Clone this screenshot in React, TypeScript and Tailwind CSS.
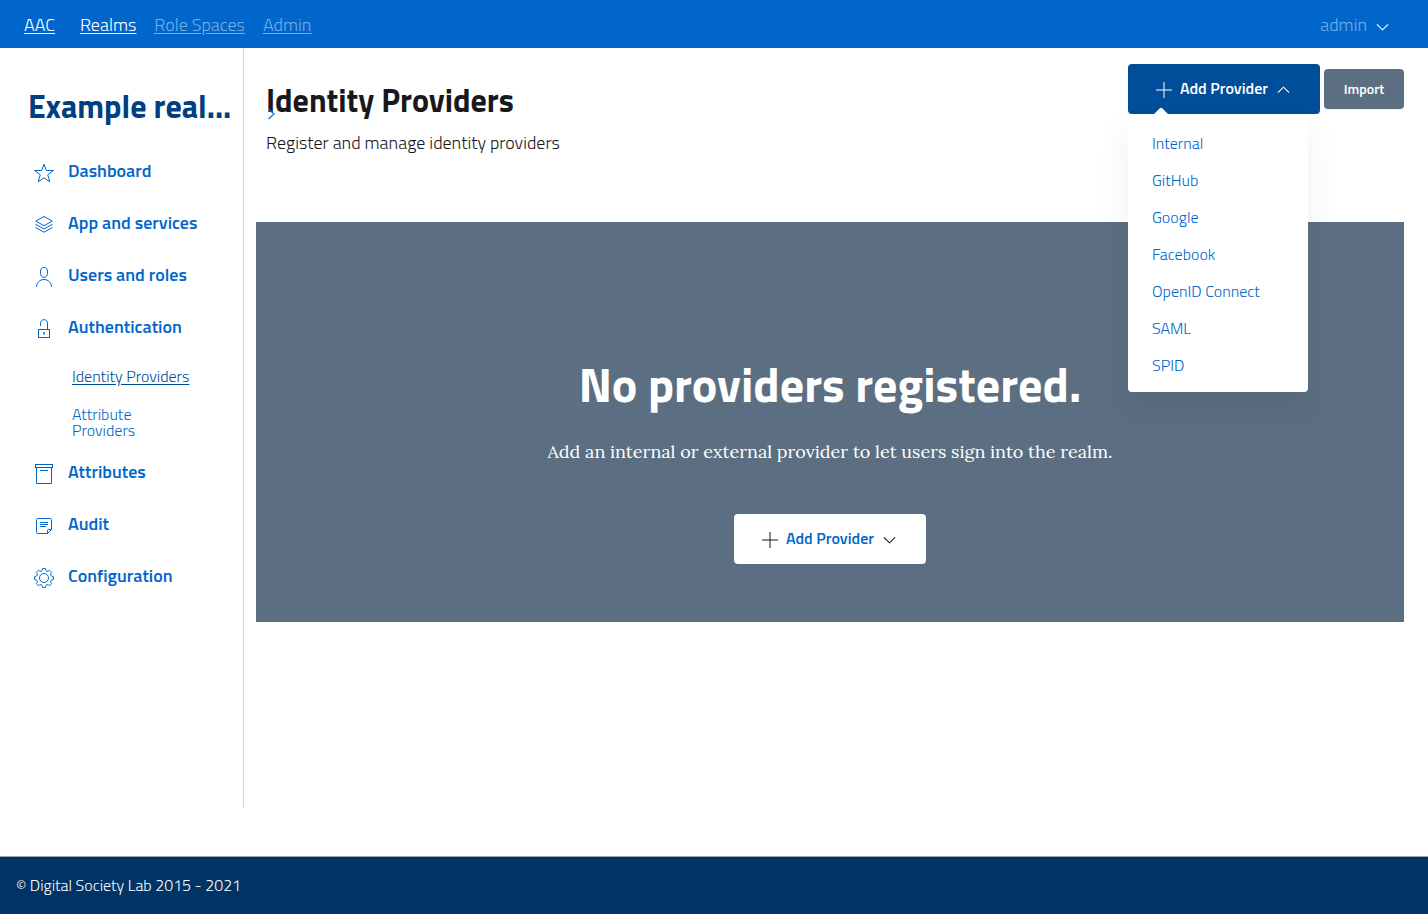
import { useState } from 'react';
import type { ReactNode } from 'react';

const gearPath = (() => {
  const teeth = 8;
  const pts: string[] = [];
  for (let i = 0; i < teeth; i++) {
    const a = (i * 2 * Math.PI) / teeth;
    const at = (r: number, o: number) =>
      `${(12 + r * Math.sin(a + o)).toFixed(2)} ${(12 - r * Math.cos(a + o)).toFixed(2)}`;
    pts.push(`${i === 0 ? 'M' : 'L'}${at(7.9, -0.23)}L${at(9.5, -0.17)}L${at(9.5, 0.17)}L${at(7.9, 0.23)}`);
    pts.push(`Q${at(6.9, Math.PI / 8)} ${at(7.9, Math.PI / 4 - 0.23)}`);
  }
  return pts.join('') + 'Z';
})();

function Icon({ children }: { children: ReactNode }) {
  return (
    <svg
      viewBox="0 0 24 24"
      className="mt-1 size-6 shrink-0"
      fill="none"
      stroke="currentColor"
      strokeWidth="1"
      aria-hidden="true"
    >
      {children}
    </svg>
  );
}

const StarIcon = () => (
  <Icon>
    <path d="M12 3.2l2.3 6.3h7.2l-5.8 4.4 2.2 7-5.9-4.2-5.9 4.2 2.2-7-5.8-4.4h7.2z" />
  </Icon>
);
const LayersIcon = () => (
  <Icon>
    <path d="M12 3.5l8.2 4.6-8.2 4.6-8.2-4.6z" />
    <path d="M3.4 11.2l8.6 4.8 8.6-4.8" />
    <path d="M3.4 14.4l8.6 4.8 8.6-4.8" />
  </Icon>
);
const UserIcon = () => (
  <Icon>
    <path d="M12 2.5c2.4 0 3.5 1.6 3.5 3.6v2.3c0 2-1.3 3.900-3.500 3.900s-3.500-1.900-3.500-3.900V6.100c0-2 1.100-3.600 3.500-3.600z" />
    <path d="M4.500 22c0-4.300 3.200-7.500 7.500-7.500s7.500 3.200 7.500 7.500" />
  </Icon>
);
const LockIcon = () => (
  <Icon>
    <rect x="6.500" y="12.500" width="11" height="8" />
    <path d="M8.500 9V6.300C8.500 4.200 9.900 2.700 12 2.700s3.500 1.500 3.500 3.600v6.200" />
    <path d="M12 15v2.500" strokeWidth="1.500" />
  </Icon>
);
const BoxIcon = () => (
  <Icon>
    <rect x="3.500" y="2.500" width="17" height="3" />
    <path d="M4.500 5.500v16h15v-16M8 8.500h8" />
  </Icon>
);
const NoteIcon = () => (
  <Icon>
    <path d="M5.500 4.500h13a1 1 0 0 1 1 1v10l-4 4h-10a1 1 0 0 1-1-1v-13a1 1 0 0 1 1-1z" />
    <path d="M19.500 15.500h-3a1 1 0 0 0-1 1v3M8 8.500h8M8 10.500h8M8 12.500h6" />
  </Icon>
);
const GearIcon = () => (
  <Icon>
    <path d={gearPath} strokeLinejoin="round" />
    <circle cx="12" cy="12" r="4.500" />
  </Icon>
);

function Chevron({ up = false }: { up?: boolean }) {
  return (
    <svg viewBox="0 0 14 14" className="mt-1 size-3.5" fill="none" stroke="currentColor" strokeWidth="1.100" aria-hidden="true">
      <path d={up ? 'M1.900 9.700L7.500 4.200l5.600 5.500' : 'M1.900 4.300L7.500 9.800l5.600-5.500'} />
    </svg>
  );
}

function Plus() {
  return (
    <svg viewBox="0 0 16 16" className="mt-1 size-4" fill="none" stroke="currentColor" strokeWidth="1" aria-hidden="true">
      <path d="M8 0v16M0 8h16" />
    </svg>
  );
}

function NavItem({ icon, label, children }: { icon: ReactNode; label: string; children?: ReactNode }) {
  return (
    <li>
      <a href="#" className="flex h-13 items-center gap-3 pl-8 text-lg leading-6 font-semibold text-[#0066cc]">
        {icon}
        {label}
      </a>
      {children}
    </li>
  );
}

const providers = ['Internal', 'GitHub', 'Google', 'Facebook', 'OpenID Connect', 'SAML', 'SPID'];

export default function App() {
  const [open, setOpen] = useState(true);

  return (
    <div className="flex min-h-screen flex-col bg-white font-['Titillium_Web',Lato,sans-serif] font-light text-[#17191c]">
      <header className="flex h-12 items-center justify-between bg-[#0066cc] pt-0.5 pr-[39px] pl-6 text-lg text-white">
        <nav className="flex items-center gap-[18px] underline underline-offset-2">
          <a href="#" className="mr-[7px]">AAC</a>
          <a href="#">Realms</a>
          <a href="#" className="text-[#73ade4]">Role Spaces</a>
          <a href="#" className="text-[#73ade4]">Admin</a>
        </nav>
        <button type="button" className="flex items-center gap-2">
          <span className="text-[#73ade4]">admin</span>
          <Chevron />
        </button>
      </header>

      <div className="flex flex-1">
        <aside className="mb-12 w-61 shrink-0 border-r border-[#d6d6d8] pt-9">
          <h2 className="px-7 text-[32px] leading-11 font-bold whitespace-nowrap text-[#004080]">Example real...</h2>
          <ul className="pt-[17px]">
            <NavItem icon={<StarIcon />} label="Dashboard" />
            <NavItem icon={<LayersIcon />} label="App and services" />
            <NavItem icon={<UserIcon />} label="Users and roles" />
            <NavItem icon={<LockIcon />} label="Authentication">
              <ul className="flex flex-col gap-[22px] pt-[15px] pr-24 pb-2 pl-18 text-base leading-4">
                <li>
                  <a href="#" className="whitespace-nowrap text-[#004d99] underline underline-offset-2">Identity Providers</a>
                </li>
                <li>
                  <a href="#" className="block text-[#0066cc]">Attribute Providers</a>
                </li>
              </ul>
            </NavItem>
            <NavItem icon={<BoxIcon />} label="Attributes" />
            <NavItem icon={<NoteIcon />} label="Audit" />
            <NavItem icon={<GearIcon />} label="Configuration" />
          </ul>
        </aside>

        <main className="min-w-0 flex-1 pt-4 pr-6 pl-3">
          <div className="flex h-[158px] items-start justify-between">
            <div className="relative pt-3 pl-2.5">
              <h1 className="text-[32px] leading-12 font-bold">Identity Providers</h1>
              <svg viewBox="0 0 8 12" className="absolute top-11 left-3 h-3 w-2 text-[#0073e6]" fill="none" stroke="currentColor" strokeWidth="1.200" aria-hidden="true">
                <path d="M0.500 1l5.500 5-5.500 5" />
              </svg>
              <p className="pt-[7px] text-lg leading-6">Register and manage identity providers</p>
            </div>

            <div className="flex items-center gap-1">
              <div className="relative">
                <button
                  type="button"
                  aria-expanded={open}
                  onClick={() => setOpen(!open)}
                  className="flex h-[50px] w-48 items-center justify-center gap-2 rounded bg-[#004d99] pr-0.5 pb-0.5 text-base font-semibold text-white"
                >
                  <Plus />
                  Add Provider
                  <Chevron up={open} />
                </button>
                {open && (
                  <div className="absolute top-full left-0 z-10 w-45 rounded-b bg-white pt-[11px] pb-2 shadow-[0_20px_30px_5px_rgba(0,0,0,0.05)]">
                    <svg viewBox="0 0 16 8" className="absolute -top-[7px] left-[25px] h-2 w-4 text-white" fill="currentColor" aria-hidden="true">
                      <path d="M0 8l6.300-6.300q1.700-1.700 3.400 0L16 8z" />
                    </svg>
                    <ul>
                      {providers.map((p) => (
                        <li key={p}>
                          <a href="#" className="block px-6 text-base leading-[37px] text-[#0066cc]">{p}</a>
                        </li>
                      ))}
                    </ul>
                  </div>
                )}
              </div>
              <button type="button" className="h-10 w-20 rounded bg-[#5c6f82] text-sm font-semibold text-white shadow-xs">
                Import
              </button>
            </div>
          </div>

          <section className="flex h-[400px] flex-col items-center bg-[#5c6f82] pt-[134px] text-white">
            <h2 className="text-5xl leading-[58px] font-bold">No providers registered.</h2>
            <p className="pt-6 font-['Lora','Liberation_Serif',serif] text-lg leading-7 font-normal">
              Add an internal or external provider to let users sign into the realm.
            </p>
            <button
              type="button"
              className="mt-12 flex h-[50px] w-48 items-center justify-center gap-2 rounded bg-white pr-0.5 pb-0.5 text-base font-semibold text-[#0066cc] shadow-xs"
            >
              <span className="text-[#17191c]"><Plus /></span>
              Add Provider
              <span className="text-[#17191c]"><Chevron /></span>
            </button>
          </section>
        </main>
      </div>

      <footer className="flex h-[58px] items-center border-t border-[#a3a5a8] bg-[#003366] px-4 pb-0.5 text-base text-white">
        © Digital Society Lab 2015 - 2021
      </footer>
    </div>
  );
}
